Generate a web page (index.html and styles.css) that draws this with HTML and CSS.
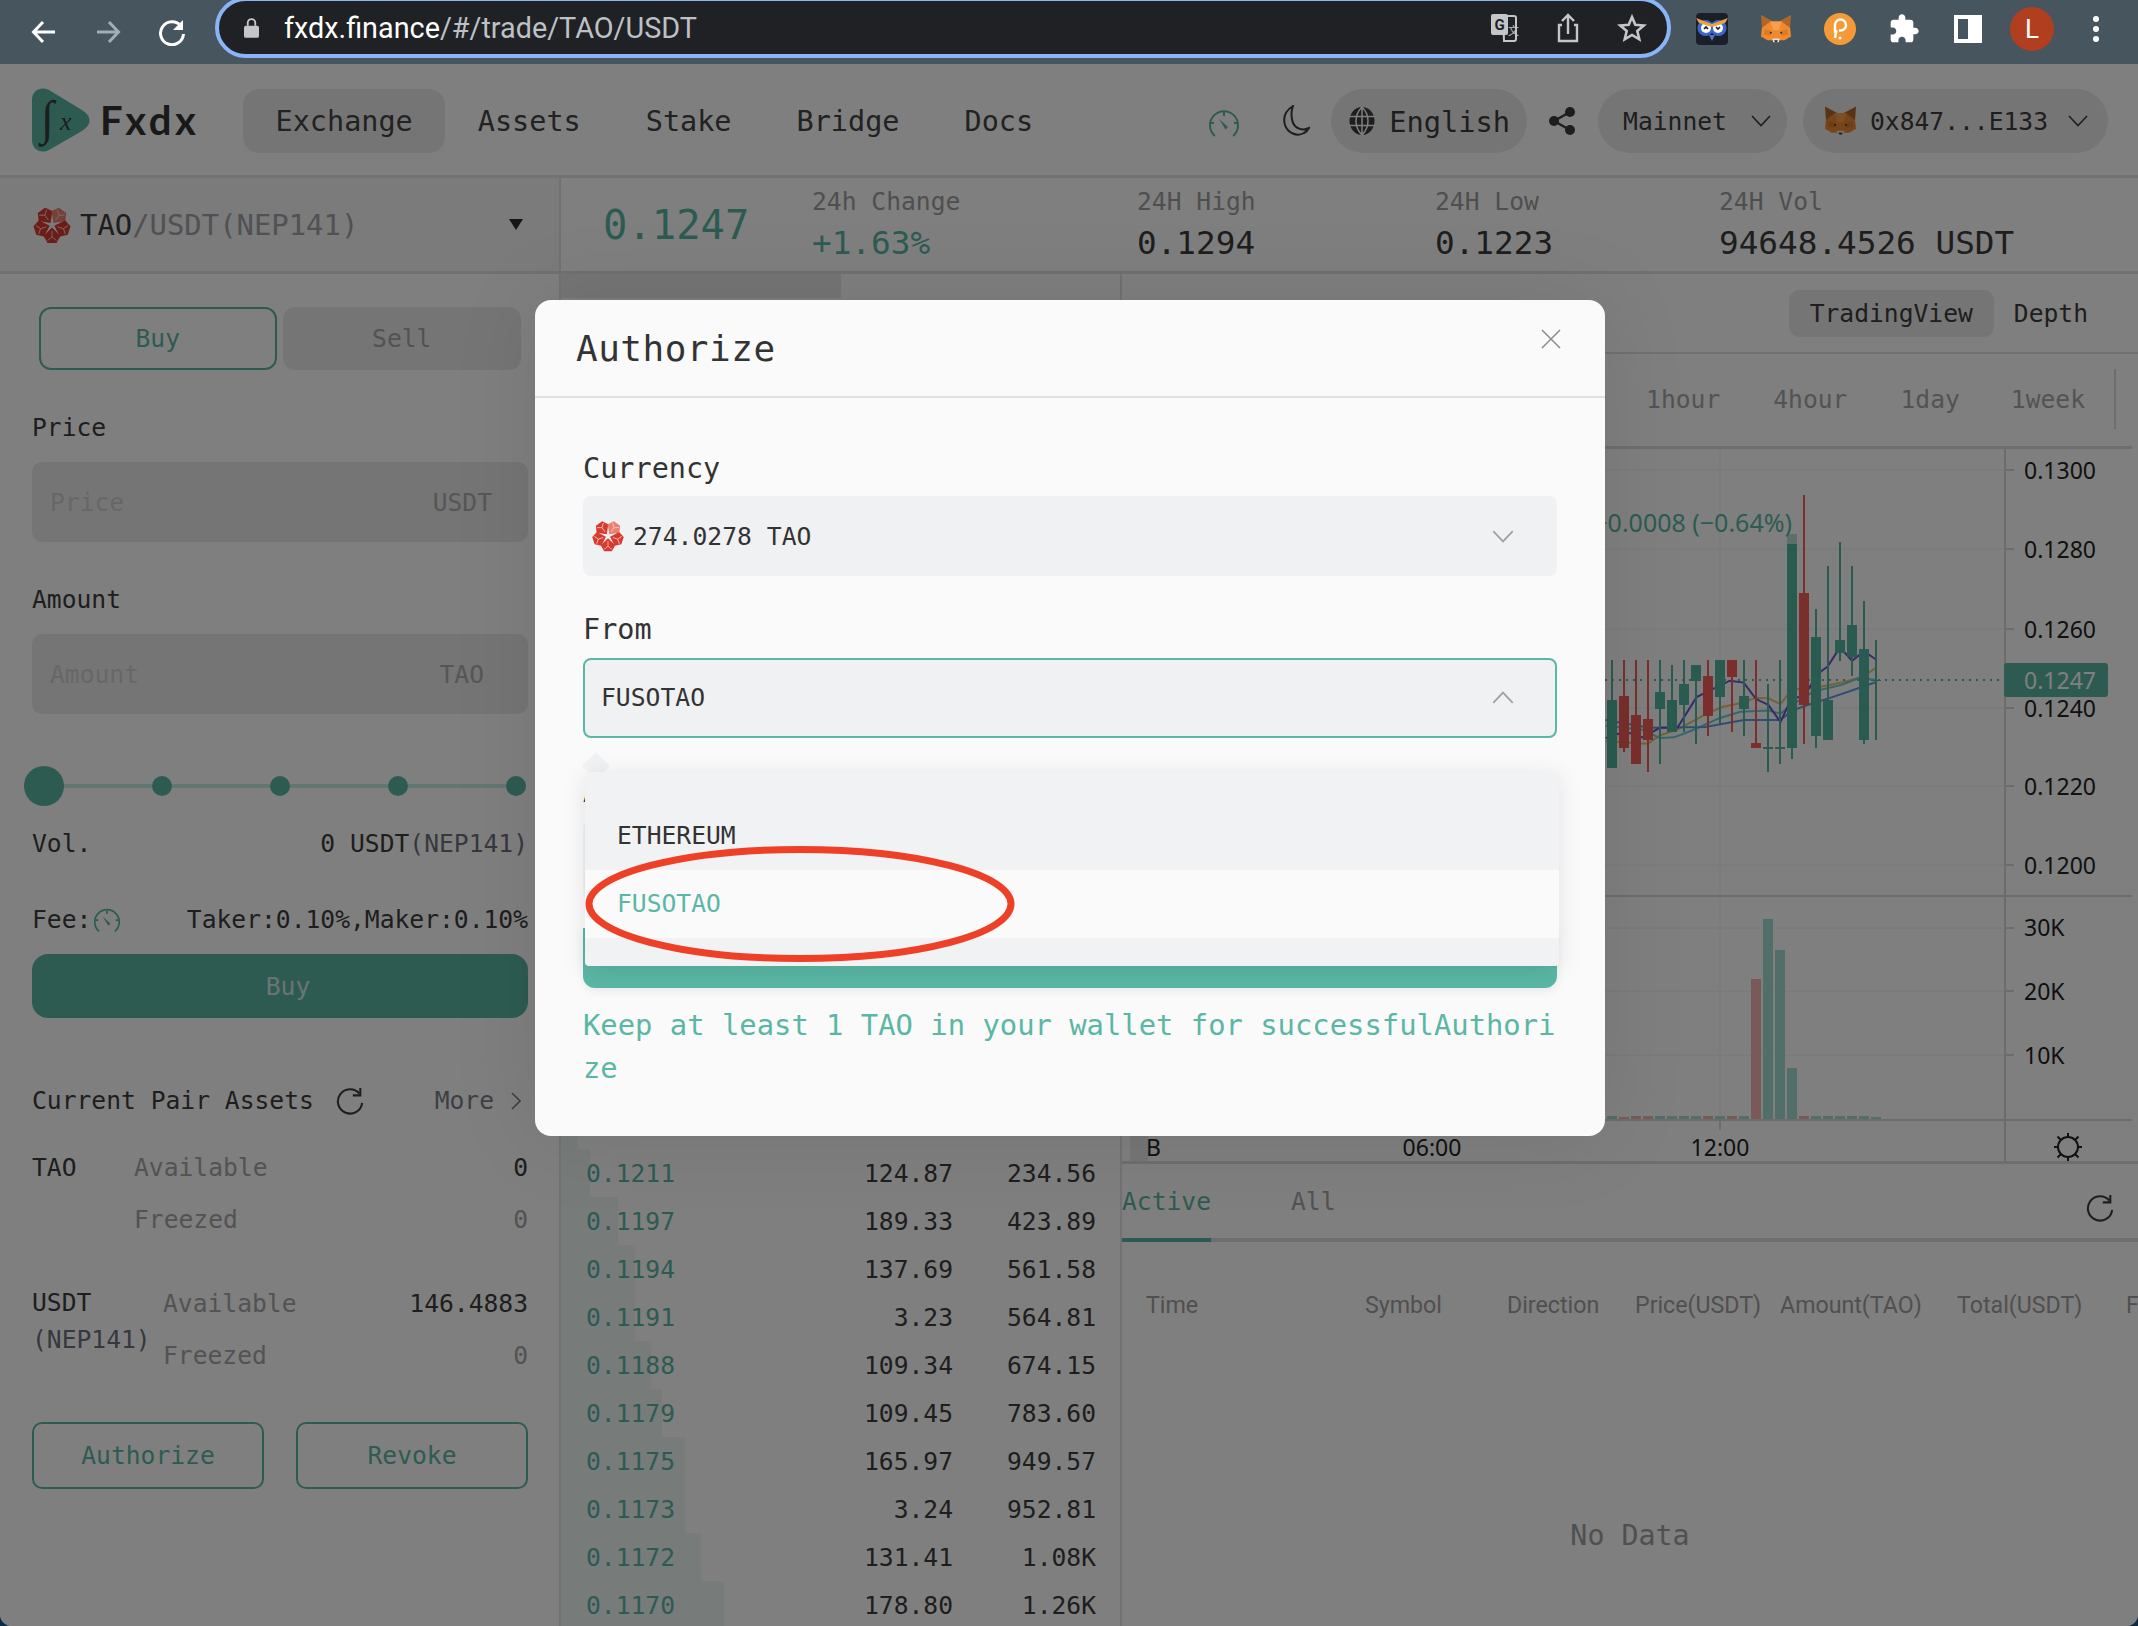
FILE: index.html
```html
<!DOCTYPE html>
<html lang="en">
<head>
<meta charset="utf-8">
<title>Fxdx Trade TAO/USDT</title>
<link rel="stylesheet" href="styles.css">
</head>
<body>
<svg class="defs" width="0" height="0" aria-hidden="true">
  <symbol id="fox" viewBox="0 0 34 30">
    <polygon points="1,0 14,7 11,15 2,14" fill="#b0662a"/>
    <polygon points="33,0 20,7 23,15 32,14" fill="#b0662a"/>
    <polygon points="2,14 11,7 23,7 32,14 33,23 26,27 8,27 1,23" fill="#ef8a33"/>
    <polygon points="11,7 23,7 20,16 14,16" fill="#f6a04e"/>
    <polygon points="5,15 12,17 11,22 4,21" fill="#dd7a26"/>
    <polygon points="29,15 22,17 23,22 30,21" fill="#dd7a26"/>
    <polygon points="13,25 21,25 20,29 14,29" fill="#e4e0d8"/>
    <polygon points="15,27 19,27 18,29 16,29" fill="#2b2b2b"/>
    <circle cx="11.5" cy="19" r="1" fill="#2b2b2b"/><circle cx="22.5" cy="19" r="1" fill="#2b2b2b"/>
  </symbol>
  <g id="shard">
    <polygon points="20,17.500 11.500,9 15.500,2 24.500,2 28.500,9"/>
    <path d="M20 14V8M20 8L15.500 4.500M20 8L24.500 4.500" stroke="#f7d0c8" stroke-width=".9" fill="none"/>
  </g>
  <symbol id="tao" viewBox="0 0 40 40">
    <use href="#shard" fill="#d93a30" transform="rotate(-36 20 20)"/>
    <use href="#shard" fill="#ea8070" transform="rotate(36 20 20)"/>
    <use href="#shard" fill="#d93a30" transform="rotate(108 20 20)"/>
    <use href="#shard" fill="#d93a30" transform="rotate(180 20 20)"/>
    <use href="#shard" fill="#d93a30" transform="rotate(252 20 20)"/>
  </symbol>
  <symbol id="gauge" viewBox="0 0 32 32">
    <path d="M7 29A14 14 0 1 1 25 29" fill="none" stroke="currentColor" stroke-width="2"/>
    <path d="M16 5v4M3 16h3M29 16h-3" stroke="currentColor" stroke-width="2"/>
    <path d="M11 12l9 8-2.5 2.5z" fill="currentColor"/>
  </symbol>
  <symbol id="refresh" viewBox="0 0 32 32">
    <path d="M26 8A13 13 0 1 0 29 18" fill="none" stroke="currentColor" stroke-width="2.2"/>
    <path d="M27 2v8h-8" fill="none" stroke="currentColor" stroke-width="2.2"/>
  </symbol>
  <symbol id="chev" viewBox="0 0 20 12">
    <path d="M1 1l9 9.5L19 1" fill="none" stroke="currentColor" stroke-width="1.6"/>
  </symbol>
</svg>

<header class="browser">
  <div class="nav-btns">
    <svg class="bicon" viewBox="0 0 28 28"><path d="M25 14H4M13 4L3.5 14 13 24" fill="none" stroke="#fff" stroke-width="3"/></svg>
    <svg class="bicon" viewBox="0 0 28 28"><path d="M3 14h21M15 4l9.5 10L15 24" fill="none" stroke="#a3adb3" stroke-width="3"/></svg>
    <svg class="bicon" viewBox="0 0 28 28"><path d="M23 8A11.5 11.5 0 1 0 25.5 16" fill="none" stroke="#fff" stroke-width="3"/><path d="M25 2v10H15z" fill="#fff"/></svg>
  </div>
  <div class="urlbar">
    <svg class="lock" viewBox="0 0 16 22"><path d="M4 9V6a4 4 0 0 1 8 0v3" fill="none" stroke="#c4c7ca" stroke-width="2"/><rect x="0" y="9" width="16" height="13" rx="2" fill="#c4c7ca"/></svg>
    <span class="url"><b class="url-host">fxdx.finance</b>/#/trade/TAO/USDT</span>
    <div class="url-icons">
      <svg class="uicon" viewBox="0 0 30 30"><path d="M14 3H25a2 2 0 0 1 2 2V26a2 2 0 0 1-2 2H15z" fill="#202124" stroke="#c4c7ca" stroke-width="2"/><rect x="2" y="1" width="17" height="21" rx="2" fill="#c4c7ca"/><text class="t-g" x="10.500" y="17">G</text><text class="t-x" x="19" y="22">文</text></svg>
      <svg class="uicon" viewBox="0 0 30 30"><path d="M9 12H6v16h18V12h-3M15 21V3M9 8l6-6 6 6" fill="none" stroke="#c4c7ca" stroke-width="2.4"/></svg>
      <svg class="uicon" viewBox="0 0 30 30"><path d="M15 4l3.300 7.800 8.500.7-6.500 5.500 2 8.300L15 21.900 7.700 26.300l2-8.300-6.500-5.500 8.500-.7z" fill="none" stroke="#c4c7ca" stroke-width="2.6"/></svg>
    </div>
  </div>
  <div class="ext-row">
    <span class="ext">
      <svg class="ext-32" viewBox="0 0 32 32"><rect width="32" height="32" rx="4" fill="#1b1f2a"/><ellipse cx="9.500" cy="15" rx="8" ry="8" fill="#3f66c9"/><ellipse cx="22.500" cy="15" rx="8" ry="8" fill="#3f66c9"/><circle cx="10" cy="15" r="5" fill="#fff"/><circle cx="22" cy="15" r="5" fill="#fff"/><path d="M8 16l2-2 2 2M20 14l2 2 2-2" fill="none" stroke="#1b1f2a" stroke-width="1.6"/><path d="M0 5l16 6 16-6-3 5-13 4-13-4z" fill="#f1a23c"/><path d="M13 22h6l-3 6z" fill="#4f74d6"/></svg>
    </span>
    <span class="ext"><svg class="ext-32" viewBox="0 0 34 30"><use href="#fox"/></svg></span>
    <span class="ext">
      <svg class="ext-32" viewBox="0 0 32 32"><circle cx="16" cy="16" r="16" fill="#f59a37"/><path d="M11 20V12a5.500 5.500 0 1 1 5.500 5.500H15" fill="none" stroke="#fff" stroke-width="2.400"/><path d="M12.500 17L11 25" stroke="#fff" stroke-width="2.400"/><circle cx="16" cy="25" r="1.500" fill="#fff"/></svg>
    </span>
    <span class="ext">
      <svg class="ext-32" viewBox="0 0 24 24"><path fill="#fff" d="M20.500 11H19V7c0-1.100-.9-2-2-2h-4V3.500C13 2.120 11.880 1 10.500 1S8 2.120 8 3.500V5H4c-1.100 0-1.990.9-1.990 2v3.800H3.500c1.490 0 2.700 1.210 2.700 2.700s-1.210 2.700-2.700 2.700H2V20c0 1.100.9 2 2 2h3.800v-1.500c0-1.490 1.210-2.700 2.700-2.700 1.490 0 2.700 1.210 2.700 2.700V22H17c1.100 0 2-.9 2-2v-4h1.500c1.380 0 2.500-1.120 2.500-2.500S21.880 11 20.500 11z"/></svg>
    </span>
    <span class="ext"><span class="sidepanel"><i class="sidepanel-fill"></i></span></span>
    <span class="ext"><span class="avatar">L</span></span>
    <span class="ext"><span class="dots"><i></i><i></i><i></i></span></span>
  </div>
</header>

<div class="page">
  <div class="topnav">
    <div class="logo">
      <svg class="logo-mark" viewBox="0 0 58 64"><path d="M0 12C0 2 9-2 17 2L50 22C60 28 60 37 50 43L17 62C9 66 0 62 0 52z" fill="#5ab7a5"/><text class="logo-int" x="9" y="46">∫</text><text class="logo-x" x="28" y="42">x</text></svg>
      <span class="logo-text">Fxdx</span>
    </div>
    <nav class="menu">
      <a class="menu-item is-active">Exchange</a>
      <a class="menu-item">Assets</a>
      <a class="menu-item">Stake</a>
      <a class="menu-item">Bridge</a>
      <a class="menu-item">Docs</a>
    </nav>
    <div class="tools">
      <svg class="t-gauge"><use href="#gauge"/></svg>
      <svg class="t-moon" viewBox="0 0 28 32"><path d="M11 1C3 6 1 13 3 20c2.500 8 12 12 19 8 2-1 4-3 5-5-6 3-13 1-16-5C9 12 9 6 11 1z" fill="none" stroke="#3c3c3c" stroke-width="2"/></svg>
      <div class="pill pill-lang">
        <svg class="t-globe" viewBox="0 0 26 28"><ellipse cx="13" cy="14" rx="12.500" ry="14" fill="#3c3c3c"/><path d="M0 9.500h26M0 18.500h26M13 0v28M13 0C5 8 5 20 13 28M13 0c8 8 8 20 0 28" fill="none" stroke="#fff" stroke-width="1.500"/></svg>
        <span class="lang-text">English</span>
      </div>
      <svg class="t-share" viewBox="0 0 26 28"><circle cx="5" cy="14" r="5" fill="#3c3c3c"/><circle cx="21" cy="5" r="5" fill="#3c3c3c"/><circle cx="21" cy="23" r="5" fill="#3c3c3c"/><path d="M5 14L21 5M5 14l16 9" stroke="#3c3c3c" stroke-width="2.500"/></svg>
      <div class="pill pill-net">
        <span>Mainnet</span>
        <svg class="chev"><use href="#chev"/></svg>
      </div>
      <div class="pill pill-wallet">
        <svg class="fox-sm"><use href="#fox"/></svg>
        <span>0x847...E133</span>
        <svg class="chev"><use href="#chev"/></svg>
      </div>
    </div>
  </div>

  <div class="ticker">
    <div class="pair">
      <svg class="pair-icon"><use href="#tao"/></svg>
      <span class="pair-base">TAO</span><span class="pair-rest">/USDT(NEP141)</span>
      <span class="pair-caret"></span>
    </div>
    <div class="last-price">0.1247</div>
    <div class="stat stat-change"><span class="stat-label">24h Change</span><span class="stat-value is-up">+1.63%</span></div>
    <div class="stat stat-high"><span class="stat-label">24H High</span><span class="stat-value">0.1294</span></div>
    <div class="stat stat-low"><span class="stat-label">24H Low</span><span class="stat-value">0.1223</span></div>
    <div class="stat"><span class="stat-label">24H Vol</span><span class="stat-value">94648.4526 USDT</span></div>
  </div>

  <div class="main">
    <aside class="form">
      <div class="side-tabs"><span class="side-tab is-on">Buy</span><span class="side-tab">Sell</span></div>
      <div class="f-label f-first">Price</div>
      <div class="f-input"><span class="ph">Price</span><span class="unit">USDT</span></div>
      <div class="f-label f-next">Amount</div>
      <div class="f-input"><span class="ph">Amount</span><span class="unit unit-tao">TAO</span></div>
      <div class="slider"><i class="knob"></i><i class="dot"></i><i class="dot"></i><i class="dot"></i><i class="dot"></i></div>
      <div class="line vol"><span>Vol.</span><span>0 USDT<em class="nep">(NEP141)</em></span></div>
      <div class="line fee"><span class="fee-l">Fee:<svg class="fee-gauge" viewBox="0 0 32 32"><use href="#gauge"/></svg></span><span>Taker:0.10%,Maker:0.10%</span></div>
      <div class="buy-btn">Buy</div>
      <div class="line cpa"><span class="cpa-l">Current Pair Assets<svg class="cpa-ref"><use href="#refresh"/></svg></span><span class="more">More<svg class="more-chev" viewBox="0 0 10 18"><path d="M1 1l8 8-8 8" fill="none" stroke="currentColor" stroke-width="1.600"/></svg></span></div>
      <div class="line asset a-first"><span class="a-name">TAO</span><span class="a-key">Available</span><span class="a-val">0</span></div>
      <div class="line asset a-second"><span class="a-name"></span><span class="a-key">Freezed</span><span class="a-val a-zero">0</span></div>
      <div class="usdt">
        <div class="usdt-name">USDT<br><em class="nep">(NEP141)</em></div>
        <div class="usdt-rows">
          <div class="line"><span class="a-key">Available</span><span class="a-val">146.4883</span></div>
          <div class="line a-third"><span class="a-key">Freezed</span><span class="a-val a-zero">0</span></div>
        </div>
      </div>
      <div class="auth-row"><span class="auth-btn">Authorize</span><span class="auth-btn">Revoke</span></div>
    </aside>

    <section class="book">
      <div class="book-tabs"><span class="book-tab"></span></div>
      <div class="book-rows">
        <div class="b-row"><i class="b-bar" style="width:17px"></i><span class="b-price">0.1215</span><span class="b-amt">109.69</span><span class="b-tot">109.69</span></div>
        <div class="b-row"><i class="b-bar" style="width:29px"></i><span class="b-price">0.1211</span><span class="b-amt">124.87</span><span class="b-tot">234.56</span></div>
        <div class="b-row"><i class="b-bar" style="width:57px"></i><span class="b-price">0.1197</span><span class="b-amt">189.33</span><span class="b-tot">423.89</span></div>
        <div class="b-row"><i class="b-bar" style="width:74px"></i><span class="b-price">0.1194</span><span class="b-amt">137.69</span><span class="b-tot">561.58</span></div>
        <div class="b-row"><i class="b-bar" style="width:74px"></i><span class="b-price">0.1191</span><span class="b-amt">3.23</span><span class="b-tot">564.81</span></div>
        <div class="b-row"><i class="b-bar" style="width:90px"></i><span class="b-price">0.1188</span><span class="b-amt">109.34</span><span class="b-tot">674.15</span></div>
        <div class="b-row"><i class="b-bar" style="width:101px"></i><span class="b-price">0.1179</span><span class="b-amt">109.45</span><span class="b-tot">783.60</span></div>
        <div class="b-row"><i class="b-bar" style="width:124px"></i><span class="b-price">0.1175</span><span class="b-amt">165.97</span><span class="b-tot">949.57</span></div>
        <div class="b-row"><i class="b-bar" style="width:124px"></i><span class="b-price">0.1173</span><span class="b-amt">3.24</span><span class="b-tot">952.81</span></div>
        <div class="b-row"><i class="b-bar" style="width:140px"></i><span class="b-price">0.1172</span><span class="b-amt">131.41</span><span class="b-tot">1.08K</span></div>
        <div class="b-row"><i class="b-bar" style="width:163px"></i><span class="b-price">0.1170</span><span class="b-amt">178.80</span><span class="b-tot">1.26K</span></div>
      </div>
    </section>

    <section class="market">
      <div class="view-tabs"><span class="view-tab is-on">TradingView</span><span class="view-tab">Depth</span></div>
      <div class="frames"><span>1hour</span><span>4hour</span><span>1day</span><span class="fr-last">1week</span><i class="frames-sep"></i></div>
      <svg class="chart" viewBox="1122 449 1016 712" width="1016" height="712">
        <g class="grid">
          <path d="M1122 470H2005M1122 549H2005M1122 629H2005M1122 708H2005M1122 786H2005M1122 865H2005M1122 928H2005M1122 991H2005M1122 1055H2005M1432 449V1120M1720 449V1120"/>
        </g>
        <path class="divide" d="M1122 896H2132M1122 1120H2132M2005 449V1161M1432 1120V1130M1720 1120V1130M2005 470H2014M2005 549H2014M2005 629H2014M2005 708H2014M2005 786H2014M2005 865H2014M2005 928H2014M2005 991H2014M2005 1055H2014"/>
        <path class="last-line" d="M1122 680H2005"/>
        <g transform="translate(1590 280) scale(.3495 .3827)">
          <polyline class="ma ma-gold" points="45,1205 165,1212 200,1190 250,1175 330,1135 380,1115 420,1108 475,1092 510,1093 545,1108 578,1070 650,1065 720,1052 784,1035 820,1012"/>
          <polyline class="ma ma-teal" points="45,1165 150,1175 200,1197 240,1195 270,1185 310,1170 370,1145 430,1128 510,1125 545,1133 578,1110 640,1075 720,1058 770,1040 820,1045"/>
          <polyline class="ma ma-blue" points="45,1150 170,1170 330,1168 440,1150 510,1150 545,1150 578,1125 625,1110 700,1088 780,1063 820,1050"/>
          <polyline class="ma ma-purple" points="45,1197 100,1180 150,1195 200,1170 250,1170 305,1090 400,1047 440,1052 475,1095 510,1110 545,1155 578,1090 612,1090 650,1030 680,1010 715,960 750,995 784,970 820,993"/>
        </g>
        <path class="wick up" d="M1612 660V768M1660 660V764M1672 665V732M1684 660V732M1696 665V744M1720 660V724M1744 660V736M1768 684V772M1780 660V764M1792 544V759M1816 609V748M1828 566V740M1840 542V661M1852 566V676M1864 601V744M1876 640V740"/>
        <path class="wick down" d="M1624 660V752M1636 660V764M1648 660V772M1708 660V736M1732 660V732M1756 660V748M1804 495V744"/>
        <path class="body up" d="M1612 700V768M1660 692V709M1672 700V732M1684 684V705M1696 665V681M1720 660V697M1744 696V709M1768 747V749M1780 747V749M1792 544V748M1816 637V736M1828 700V740M1840 640V653M1852 625V657M1864 649V740M1876 680V681"/>
        <path class="body down" d="M1624 696V748M1636 715V764M1648 719V740M1708 676V716M1732 660V677M1756 743V748M1804 593V705"/>
        <path class="body ghost" d="M1792 534V544"/>
        <path class="body vol-up" d="M1612 1119V1116M1660 1119V1116M1672 1119V1116M1684 1119V1116M1696 1119V1116M1720 1119V1116M1744 1119V1116M1768 1119V919M1780 1119V950M1792 1119V1068M1816 1119V1116M1828 1119V1116M1840 1119V1116M1852 1119V1116M1864 1119V1116M1876 1119V1117"/>
        <path class="body vol-down" d="M1624 1119V1117M1636 1119V1116M1648 1119V1116M1708 1119V1116M1732 1119V1116M1756 1119V979M1804 1119V1116"/>
        <text class="legend" x="1792" y="532" text-anchor="end">−0.0008 (−0.64%)</text>
        <g class="axis">
          <text x="2024" y="479">0.1300</text>
          <text x="2024" y="558">0.1280</text>
          <text x="2024" y="638">0.1260</text>
          <text x="2024" y="717">0.1240</text>
          <text x="2024" y="795">0.1220</text>
          <text x="2024" y="874">0.1200</text>
          <text x="2024" y="936">30K</text>
          <text x="2024" y="1000">20K</text>
          <text x="2024" y="1064">10K</text>
          <text x="1432" y="1156" text-anchor="middle">06:00</text>
          <text x="1720" y="1156" text-anchor="middle">12:00</text>
        </g>
        <rect class="tag" x="2004" y="663" width="104" height="34" rx="3"/>
        <text class="tag-text" x="2024" y="689">0.1247</text>
        <rect class="bar-mark" x="1130" y="1136" width="18" height="25"/>
        <text class="axis-b" x="1146" y="1156">B</text>
        <g class="sun" transform="translate(2068 1147)">
          <circle r="10"/>
          <path d="M0-10V-14M0 10V14M-10 0H-14M10 0H14M-7-7L-10.500-10.500M7-7L10.500-10.500M-7 7L-10.500 10.500M7 7L10.500 10.500"/>
        </g>
      </svg>
      <div class="order-tabs"><span class="order-tab is-on">Active</span><span class="order-tab">All</span><svg class="order-ref"><use href="#refresh"/></svg></div>
      <div class="order-head"><span>Time</span><span>Symbol</span><span>Direction</span><span>Price(USDT)</span><span>Amount(TAO)</span><span>Total(USDT)</span><span>Fee</span></div>
      <div class="no-data">No Data</div>
    </section>
  </div>

  <div class="mask"></div>

  <div class="modal">
    <div class="modal-head">
      <h2 class="modal-title">Authorize</h2>
      <svg class="modal-close" viewBox="0 0 20 20"><path d="M1 1l18 18M19 1L1 19" fill="none" stroke="#8a8a8a" stroke-width="1.500"/></svg>
    </div>
    <div class="modal-body">
      <label class="m-label m-first">Currency</label>
      <div class="m-select">
        <svg class="m-tao"><use href="#tao"/></svg>
        <span class="m-sel-text">274.0278 TAO</span>
        <svg class="m-chev"><use href="#chev"/></svg>
      </div>
      <label class="m-label m-from">From</label>
      <div class="m-select is-open">
        <span class="m-sel-text">FUSOTAO</span>
        <svg class="m-chev m-flip"><use href="#chev"/></svg>
      </div>
      <label class="m-label">Amount</label>
      <div class="m-select m-hidden-input"></div>
      <div class="m-submit"></div>
      <p class="m-tip">Keep at least 1 TAO in your wallet for successfulAuthorize</p>
    </div>
    <i class="dd-arrow"></i>
    <div class="dropdown">
      <div class="dd-item dd-first">ETHEREUM</div>
      <div class="dd-item is-sel">FUSOTAO</div>
    </div>
    <svg class="oval" viewBox="0 0 430 120" width="430" height="120"><ellipse cx="215" cy="60" rx="211" ry="54.500"/></svg>
  </div>
</div>
</body>
</html>
```

FILE: styles.css
```css
* { box-sizing: border-box; }
html { background: #0c2a44; }
body {
  margin: 0;
  width: 2138px;
  height: 1626px;
  overflow: hidden;
  font-family: "DejaVu Sans Mono", monospace;
  font-size: 24.65px;
  color: #3c3c3c;
}
i, em { font-style: normal; }
.defs { position: absolute; }

/* browser chrome */
.browser { height: 64px; background: #47555f; display: flex; overflow: hidden; }
.nav-btns { display: flex; padding-left: 12px; align-items: center; }
.bicon { width: 28px; height: 28px; margin: 0 18px; }
.urlbar {
  width: 1456px; height: 61px; margin: -3px 0 0 11px;
  background: #202124; border: 4px solid #8ab4f8; border-radius: 31px;
  display: flex; align-items: center; padding-left: 25px;
}
.lock { width: 15px; height: 21px; }
.url { margin-left: 25px; font-family: Roboto, sans-serif; font-size: 28.8px; color: #bdc1c6; }
.url-host { font-weight: 400; color: #fff; }
.url-icons { margin-left: auto; display: flex; gap: 34px; padding-right: 20px; }
.uicon { width: 30px; height: 30px; }
.t-g { font: 700 15px Roboto, sans-serif; fill: #202124; text-anchor: middle; }
.t-x { font: 11px "Noto Sans CJK SC", sans-serif; fill: #c4c7ca; }
.ext-row { display: flex; margin-left: 9px; }
.ext { width: 64px; height: 58px; display: flex; align-items: center; justify-content: center; }
.ext-32 { width: 32px; height: 32px; }
.sidepanel { width: 28px; height: 28px; border: 4px solid #fff; display: flex; justify-content: flex-end; }
.sidepanel-fill { width: 10px; background: #fff; }
.avatar { width: 44px; height: 44px; border-radius: 50%; background: #b13f1f; color: #fff; font: 26px Roboto, sans-serif; display: flex; align-items: center; justify-content: center; }
.dots { display: flex; flex-direction: column; gap: 4px; }
.dots i { width: 6px; height: 6px; border-radius: 50%; background: #fff; }

/* page */
.page { position: relative; height: 1562px; background: #fff; overflow: hidden; border-radius: 0 0 12px 12px; }
.mask { position: absolute; inset: 0; background: rgba(0, 0, 0, .5); }

.topnav { height: 114px; border-bottom: 3px solid #e4e5ea; display: flex; align-items: center; padding: 3px 0 0 32px; }
.logo { width: 211px; display: flex; align-items: center; gap: 10px; margin-top: -3px; }
.logo-mark { width: 58px; height: 64px; }
.logo-int { font: 48px "Liberation Serif", serif; fill: #3c3c3c; }
.logo-x { font: italic 26px "Liberation Serif", serif; fill: #3c3c3c; }
.logo-text { font: 700 40px Lato, sans-serif; color: #333; letter-spacing: 3.5px; }
.menu { display: flex; }
.menu-item { font-size: 28.5px; line-height: 62px; height: 64px; padding: 2px 32.500px 0; border-radius: 16px; color: #444; }
.menu-item.is-active { background: #ebebeb; }
.tools { margin-left: auto; padding-right: 30px; display: flex; align-items: center; }
.t-gauge { width: 32px; height: 32px; color: #5ab7a5; margin-top: 4px; }
.t-moon { width: 28px; height: 32px; margin-left: 42px; }
.pill { display: flex; align-items: center; height: 64px; border-radius: 32px; background: #ebebeb; }
.pill-lang { margin-left: 21px; padding: 2px 17px 0 18px; gap: 14px; font-size: 28.7px; }
.t-globe { width: 26px; height: 28px; margin-top: -2px; }
.t-share { width: 26px; height: 28px; margin: 0 23px 0 22px; }
.pill-net { padding: 0 16px 0 25px; gap: 24px; }
.pill-wallet { margin-left: 16px; padding: 0 20px 0 21px; }
.fox-sm { width: 33px; height: 30px; margin-right: 13px; }
.chev { width: 20px; height: 12px; color: #3c3c3c; }
.pill-wallet .chev { margin-left: 20px; }

.ticker { height: 96px; border-bottom: 3px solid #dfe0e6; display: flex; align-items: center; }
.pair { width: 561px; height: 100%; background: #f6f6f6; border-right: 2px solid #e4e5ea; display: flex; align-items: center; padding-left: 32px; font-size: 28.9px; }
.pair-icon { width: 40px; height: 40px; margin-right: 8px; }
.pair-base { color: #3c3c3c; }
.pair-rest { color: #a0a2a8; }
.pair-caret { margin-left: auto; margin-right: 36px; border-top: 11px solid #2a2a2a; border-left: 7px solid transparent; border-right: 7px solid transparent; }
.last-price { width: 251px; padding-left: 42px; font-size: 40.5px; color: #5ab7a5; }
.stat { display: flex; flex-direction: column; width: 298px; margin-top: -3px; }
.stat-change { width: 325px; }
.stat-low { width: 284px; }
.stat-label { line-height: 32px; color: #9e9e9e; }
.stat-value { font-size: 32.7px; line-height: 36px; margin-top: 7px; color: #3c3c3c; }
.stat-value.is-up { color: #5ab7a5; }

.main { display: flex; height: 1352px; }

/* order form */
.form { width: 561px; flex: none; border-right: 2px solid #e4e5ea; padding: 33px 31px 0 32px; }
.side-tabs { display: flex; gap: 6px; padding: 0 7px; }
.side-tab { width: 239px; height: 63px; border-radius: 12px; background: #ebebeb; color: #a6a6a6; display: flex; align-items: center; justify-content: center; }
.side-tab.is-on { width: 238px; background: transparent; border: 2px solid #5ab7a5; color: #5ab7a5; }
.f-label { line-height: 32px; }
.f-first { margin-top: 42px; }
.f-next { margin-top: 42px; }
.f-input { height: 80px; margin-top: 18px; background: #ebebeb; border-radius: 10px; display: flex; align-items: center; justify-content: space-between; padding: 0 36px 0 18px; }
.ph { color: #cfcfcf; }
.unit { color: #adadad; }
.unit-tao { margin-right: 8px; }
.slider { margin: 52px 0 0 -8px; height: 40px; width: 502px; display: flex; align-items: center; gap: 98px; background: linear-gradient(#c8ece4, #c8ece4) center / 100% 4px no-repeat; }
.knob { width: 40px; height: 40px; border-radius: 50%; background: #5ab7a5; margin-right: -10px; }
.dot { width: 20px; height: 20px; border-radius: 50%; background: #5ab7a5; }
.line { display: flex; justify-content: space-between; align-items: center; line-height: 32px; }
.nep { color: #6d7080; }
.vol { margin-top: 22px; }
.fee { margin-top: 44px; }
.fee-l { display: flex; align-items: center; }
.fee-gauge { width: 32px; height: 28px; color: #5ab7a5; }
.buy-btn { height: 64px; margin-top: 18px; padding-left: 16px; border-radius: 16px; background: #5ab7a5; color: #d7e9e5; display: flex; align-items: center; justify-content: center; }
.cpa { margin-top: 67px; }
.cpa-l { display: flex; align-items: center; }
.cpa-ref { width: 30px; height: 30px; margin-left: 21px; color: #3c3c3c; }
.more { color: #7d7f8a; display: flex; align-items: center; gap: 17px; margin-right: 7px; }
.more-chev { width: 10px; height: 18px; }
.asset { justify-content: flex-start; }
.a-first { margin-top: 35px; }
.a-second { margin-top: 20px; }
.a-third { margin-top: 20px; }
.a-name { width: 102px; }
.a-key { color: #a6a6a6; }
.a-val { margin-left: auto; }
.a-zero { color: #a6a6a6; }
.usdt { display: flex; margin-top: 52px; }
.usdt-name { width: 131px; line-height: 37px; margin-top: -4px; }
.usdt-rows { flex: 1; }
.auth-row { display: flex; gap: 32px; margin-top: 50px; }
.auth-btn { width: 232px; height: 67px; border: 2px solid #5ab7a5; border-radius: 10px; color: #5ab7a5; display: flex; align-items: center; justify-content: center; }

/* order book */
.book { width: 561px; flex: none; border-right: 2px solid #e4e5ea; }
.book-tabs { height: 24px; }
.book-tab { display: block; width: 280px; height: 24px; background: #ebebeb; }
.book-rows { margin-top: 803px; }
.b-row { position: relative; height: 48px; display: flex; align-items: center; padding: 0 24px 0 25px; }
.b-bar { position: absolute; left: 0; top: 0; bottom: 0; background: rgba(90, 183, 165, .1); }
.b-price { position: relative; color: #5ab7a5; flex: 1; }
.b-amt { position: relative; width: 120px; text-align: right; }
.b-tot { position: relative; width: 143px; text-align: right; }

/* chart + orders */
.market { flex: 1; min-width: 0; }
.view-tabs { height: 80px; border-bottom: 2px solid #dfe0e6; display: flex; align-items: flex-start; justify-content: flex-end; padding: 16px 50px 0 0; gap: 20px; }
.view-tab { height: 47px; display: flex; align-items: center; padding: 0; }
.view-tab.is-on { background: #ebebeb; border-radius: 10px; padding: 0 21px; }
.frames { height: 95px; border-bottom: 3px solid #dcdde3; display: flex; align-items: center; justify-content: flex-end; gap: 53px; padding: 0 16px 2px 0; color: #a6a6a6; margin-right: 6px; }
.fr-last { margin-left: -2px; }
.frames-sep { width: 2px; height: 60px; background: #dcdde3; margin-left: -24px; }
.chart { display: block; overflow: visible; }
.grid path { fill: none; stroke: #f0f0f0; stroke-width: 1; }
.divide { fill: none; stroke: #d8d8d8; stroke-width: 2; }
.last-line { stroke: #5ab7a5; stroke-width: 2; stroke-dasharray: 2 5; }
.ma { fill: none; stroke-width: 2; vector-effect: non-scaling-stroke; }
.ma-purple { stroke: #6f52d6; }
.ma-gold { stroke: #e8c46a; }
.ma-teal { stroke: #6fcdd0; }
.ma-blue { stroke: #5a9de8; }
.wick { fill: none; stroke-width: 2; }
.body { fill: none; stroke-width: 10; }
.up { stroke: #54b6a2; }
.down { stroke: #f45e58; }
.ghost { stroke: #b7dfd6; }
.vol-up { stroke: #a4dcd2; }
.vol-down { stroke: #f4b4b0; }
.legend { font: 25px "Noto Sans", sans-serif; fill: #5ab7a5; }
.axis text, .tag-text, .axis-b { font: 23px "Noto Sans", sans-serif; }
.axis text, .axis-b { fill: #222; }
.tag { fill: #5ab7a5; }
.tag-text { fill: #fff; }
.bar-mark { fill: #ececec; }
.sun { fill: none; stroke: #222; stroke-width: 2; }

.order-tabs { height: 81px; border-top: 3px solid #dcdde0; border-bottom: 4px solid #dcdde0; display: flex; align-items: flex-end; position: relative; color: #a6a6a6; }
.order-tab { height: 77px; padding-top: 25px; line-height: 32px; margin-right: 80px; }
.order-tab.is-on { color: #5ab7a5; border-bottom: 4px solid #5ab7a5; height: 81px; margin-bottom: -4px; }
.order-ref { position: absolute; right: 23px; top: 29px; width: 30px; height: 30px; color: #3c3c3c; }
.order-head { display: grid; grid-template-columns: 219px 142px 128px 145px 177px 169px 30px; padding-left: 24px; margin-top: 47px; font: 23.2px/32px Roboto, sans-serif; color: #a0a0a0; white-space: nowrap; }
.no-data { margin-top: 199px; text-align: center; font-size: 28.3px; line-height: 32px; color: #a0a0a0; }

/* modal */
.modal {
  position: absolute; left: 535px; top: 236px; width: 1070px; height: 836px;
  background: #fafafa; border-radius: 16px; box-shadow: 0 0 90px rgba(0, 0, 0, .09);
}
.modal-head { height: 98px; border-bottom: 2px solid #e0e0e6; padding: 25px 41px 0; position: relative; }
.modal-title { margin: 0; font-weight: 400; font-size: 36px; letter-spacing: .5px; line-height: 48px; color: #333; }
.modal-close { position: absolute; right: 44px; top: 29px; width: 20px; height: 20px; }
.modal-body { padding: 0 48px; }
.m-label { display: block; line-height: 34px; margin-top: 38px; font-size: 28.5px; color: #333; }
.m-first { margin-top: 54px; }
.m-from { margin-top: 37px; }
.m-select { height: 80px; margin-top: 10px; background: #f0f1f3; border-radius: 8px; display: flex; align-items: center; padding: 0 43px 0 8px; }
.m-from + .m-select { margin-top: 11px; }
.m-tao { width: 34px; height: 34px; margin-right: 8px; }
.m-sel-text { font-size: 24.7px; color: #333; }
.m-chev { margin-left: auto; width: 22px; height: 13px; color: #a0a0a0; }
.m-flip { transform: rotate(180deg); }
.is-open { border: 2px solid #5ab7a5; padding: 0 41px 2px 16px; }
.m-submit { height: 60px; margin-top: 28px; border-radius: 0 0 12px 12px; background: #5ab7a5; box-shadow: 0 4px 10px rgba(0, 0, 0, .06); }
.m-tip { margin: 16px 0 0; font-size: 28.85px; line-height: 43px; color: #5ab7a5; word-break: break-all; }
.dd-arrow { position: absolute; left: 51px; top: 456px; width: 20px; height: 20px; background: #f1f2f4; transform: rotate(45deg); border-radius: 2px; }
.dropdown { position: absolute; left: 50px; top: 472px; width: 974px; height: 194px; background: #f1f2f4; border-radius: 8px 8px 4px 4px; box-shadow: 0 4px 24px rgba(0, 0, 0, .1); padding-top: 30px; font-size: 24.65px; }
.dd-item { height: 68px; line-height: 68px; padding-left: 32px; color: #333; }
.is-sel { background: #fafafa; color: #5ab7a5; }
.oval { position: absolute; left: 50px; top: 544px; }
.oval ellipse { fill: none; stroke: #ee4026; stroke-width: 7; }
```
